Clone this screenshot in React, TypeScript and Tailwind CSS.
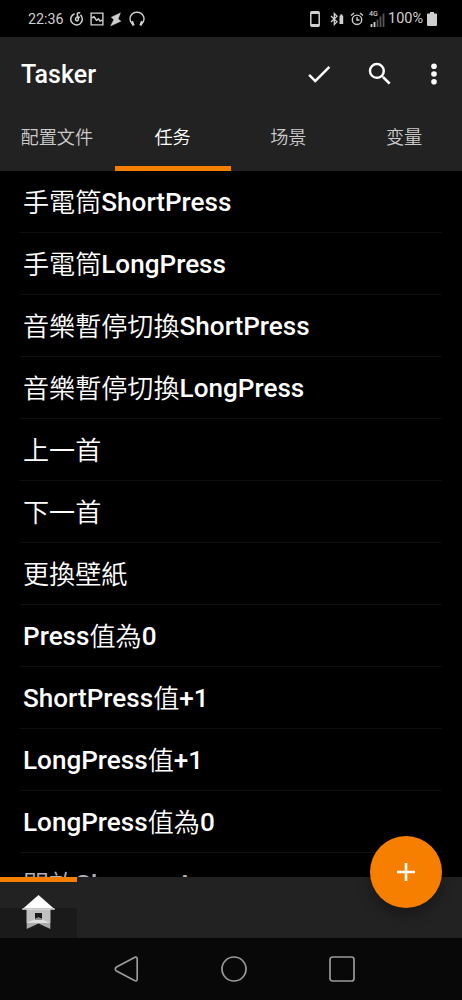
import { ReactNode } from 'react';

const tabs = ['配置文件', '任务', '场景', '变量'];

const tasks = [
    '手電筒ShortPress',
    '手電筒LongPress',
    '音樂暫停切換ShortPress',
    '音樂暫停切換LongPress',
    '上一首',
    '下一首',
    '更換壁紙',
    'Press值為0',
    'ShortPress值+1',
    'LongPress值+1',
    'LongPress值為0',
    '開放Shames A',
];

// Latin runs are medium weight, CJK runs stay demi-light
function MixedText({ text }: { text: string }) {
    const parts = text.match(/[\x00-\x7f]+|[^\x00-\x7f]+/g) || [];
    return (
        <>
            {parts.map((part, i) => (
                <span key={i} className={`leading-none ${/^[\x00-\x7f]/.test(part) ? 'align-[1px] font-medium' : 'font-[350]'}`}>{part}</span>
            ))}
        </>
    );
}

function Icon({ children, className, viewBox = '0 0 24 24' }: { children: ReactNode; className: string; viewBox?: string }) {
    return (
        <svg viewBox={viewBox} className={`block shrink-0 ${className}`} fill="none" stroke="currentColor">
            {children}
        </svg>
    );
}

function StatusBar() {
    return (
        <div className="flex h-[37px] shrink-0 items-center bg-black pl-7 pr-[25px] pt-px text-[#cfcfcf]">
            <span className="w-[36px] text-[14.3px] leading-[36px]">22:36</span>
            {/* Music */}
            <Icon viewBox="0 0 14 14" className="ml-[6px] h-[14px] w-[14px]">
                <path d="M4.6 1.700A5.800 5.800 0 1 0 10.500 2.900" strokeWidth="1.500" />
                <path d="M10.200 1.200C8.600.2 7 1 7.300 2.500L8.300 7.200C8.500 9.300 5.600 9.400 5.500 7.300 5.400 5.300 8 4.200 9.800 5.600" strokeWidth="1.500" />
            </Icon>
            {/* Picture */}
            <Icon viewBox="0 0 14 14" className="ml-[6px] h-[14px] w-[14px]">
                <path d="M1.1 1.1h11.800v11.800H1.100z" strokeWidth="1.400" />
                <path d="M1.500 6 4 4.800l2.500 3.500 2-1.500 1.500 2.300L12.500 8" strokeWidth="1.500" />
            </Icon>
            {/* Tasker bolt */}
            <Icon viewBox="0 0 12 15" className="ml-[6px] h-[15px] w-[12px]">
                <path d="M10.500.8 1.200 5.300l2.600 2.300-3.300 6.400L11 9.200 8.200 7z" fill="currentColor" strokeWidth=".4" />
            </Icon>
            {/* Headphones */}
            <Icon viewBox="0 0 16 16" className="ml-[7px] h-4 w-4">
                <path d="M3.700 13.300C-1.500 8.500 1.500 1.200 8 1.200s9.500 7.300 4.300 12.100" strokeWidth="1.400" />
                <path d="m2.800 10.300 1.800 4.200M13.200 10.300l-1.800 4.200" strokeWidth="2.400" />
            </Icon>
            <div className="ml-auto flex items-center">
                <Icon viewBox="0 0 10 16" className="h-4 w-[10px]">
                    <rect x=".8" y=".8" width="8.400" height="14.400" rx="1" strokeWidth="1.500" />
                    <path d="M1 1.800h8M1 14.200h8" strokeWidth="2.200" />
                </Icon>
                <Icon viewBox="0 0 14 14" className="ml-[10px] h-[14px] w-[14px]">
                    <path d="m1 4 6 5.800L4.300 12.500V1.500L7 4.200 1 10" strokeWidth="1.300" />
                    <path d="M9.500 3.500h3.700V12H9.500zM10.500 2.300h1.700v1.500h-1.700z" fill="currentColor" stroke="none" />
                </Icon>
                <Icon viewBox="0 0 14 14" className="ml-[6px] h-[14px] w-[14px]">
                    <circle cx="7" cy="7.800" r="4.700" strokeWidth="1.400" />
                    <path d="M7 5v3h2.500M1 3.500 4 1M13 3.500 10 1" strokeWidth="1.300" />
                </Icon>
                <div className="relative ml-[6px] h-[15px] w-[15px]">
                    <span className="absolute -left-px -top-px text-[7px] font-medium leading-[7px]">4G</span>
                    <svg viewBox="0 0 15 15" className="block h-[15px] w-[15px]" fill="none">
                        <path d="M1.500 15v-3M4.500 15v-5" stroke="#cfcfcf" strokeWidth="1.800" />
                        <path d="M7.500 15V7.500M10.500 15V4.500M13.500 15V1.500" stroke="#555" strokeWidth="1.800" />
                    </svg>
                </div>
                <span className="ml-[3px] w-[35px] text-[14.500px] leading-[36px]">100%</span>
                <Icon viewBox="0 0 10 14" className="ml-[4px] h-[14px] w-[10px]">
                    <path d="M3 0h4v1.500h2a1 1 0 0 1 1 1V13a1 1 0 0 1-1 1H1a1 1 0 0 1-1-1V2.500a1 1 0 0 1 1-1h2z" fill="currentColor" stroke="none" />
                </Icon>
            </div>
        </div>
    );
}

function Header() {
    return (
        <div className="flex h-[133.5px] shrink-0 flex-col bg-[#222]">
            <div className="flex h-[73px] items-center pl-[21px] pr-[15px] text-white">
                <h1 className="pt-[2px] text-[25px] font-medium leading-[30px]">Tasker</h1>
                <Icon className="ml-auto h-[30px] w-[30px]">
                    <path d="M9 16.200 4.800 12l-1.400 1.400L9 19 21 7l-1.400-1.400z" fill="currentColor" stroke="none" />
                </Icon>
                <Icon className="ml-[31px] h-[30px] w-[30px]">
                    <path d="M15.500 14h-.79l-.28-.27A6.471 6.471 0 0 0 16 9.500 6.500 6.500 0 1 0 9.500 16c1.610 0 3.090-.59 4.230-1.570l.27.28v.79l5 4.990L20.490 19l-4.990-5zm-6 0C7.010 14 5 11.990 5 9.500S7.010 5 9.500 5 14 7.010 14 9.500 11.990 14 9.500 14z" fill="currentColor" stroke="none" />
                </Icon>
                <Icon viewBox="0 0 6 22" className="ml-[36px] mr-[10px] h-[22px] w-[6px]">
                    <g fill="currentColor" stroke="none">
                        <circle cx="3" cy="3.200" r="2.800" />
                        <circle cx="3" cy="11" r="2.800" />
                        <circle cx="3" cy="18.800" r="2.800" />
                    </g>
                </Icon>
            </div>
            <div className="-ml-px grid flex-1 grid-cols-4 text-[18.2px] font-[350]">
                {tabs.map((tab) => (
                    <button
                        key={tab}
                        className={`flex justify-center border-b-[5px] pt-[14px] leading-[27px] ${tab === '任务' ? 'border-[#f77f00] text-white' : 'border-transparent text-[#cacaca]'}`}
                    >
                        {tab}
                    </button>
                ))}
            </div>
        </div>
    );
}

export default function App() {
    return (
        <div className="flex h-[1000px] w-[462px] flex-col overflow-hidden bg-black font-['Roboto','Noto_Sans_CJK_SC',sans-serif]">
            <StatusBar />
            <Header />

            {/* Task list */}
            <ul className="min-h-0 flex-1 overflow-hidden bg-black px-5 pt-[0.5px] font-['Roboto','Noto_Sans_CJK_TC',sans-serif]">
                {tasks.map((task, i) => (
                    <li key={task} className={`flex h-[62px] items-center whitespace-nowrap border-b border-[#0f0f0f] pl-[3px] pt-[2px] text-[26.1px] ${i === 11 ? 'text-[#b0b0b0]' : 'text-white'}`}>
                        <div className="leading-[38px]"><MixedText text={task} /></div>
                    </li>
                ))}
            </ul>

            {/* Project bar */}
            <div className="relative h-[61px] shrink-0 bg-[#222]">
                <div className="flex h-full w-[77px] flex-col border-t-[5px] border-[#f77f00] bg-linear-to-b from-[#222] from-[46%] to-[#1a1a1a] to-[46%]">
                    <svg viewBox="0 0 34 36" className="ml-[21px] mt-[12px] h-9 w-[34px]">
                        <path d="M5.500 14h24v15h-24z" fill="#c0c0c0" />
                        <path d="M14 19h7v7h-7z" fill="#1a1a1a" />
                        <path d="M5.700 29 17.500 23.500 29.300 29v6L17.500 29.500 5.700 35z" fill="#aaa" />
                        <path d="M5.700 29 17.500 23.500 29.300 29z" fill="#dedede" />
                        <path d="M14 25.100 17.500 23.500 21 25.100V26h-7z" fill="#909090" />
                        <path d="M17.500 1 34 15.500H1z" fill="#fff" />
                        <path d="M1.600 14h31.800l.6 1.500H1z" fill="#c8c8c8" />
                    </svg>
                </div>
                <button className="absolute right-[20.5px] top-[-41px] flex h-[72px] w-[72px] items-center justify-center rounded-full bg-[#f77f00] shadow-[0_7px_14px_rgba(0,0,0,0.3)]">
                    <Icon viewBox="0 0 18 18" className="h-[18px] w-[18px] text-white">
                        <path d="M9 0v18M0 9h18" strokeWidth="2.600" />
                    </Icon>
                </button>
            </div>

            {/* System navigation */}
            <div className="flex h-[62px] shrink-0 items-center justify-center gap-[82px] bg-[#080808] pl-[6px] text-[#9a9a9a]">
                <Icon viewBox="0 0 26 26" className="h-[26px] w-[26px]">
                    <path d="M21.500 1.400 3.500 11q-2.500 2 0 4l18 9.600q2.700 1.300 2.700-1.500V3q0-2.800-2.700-1.600z" strokeWidth="1.700" />
                </Icon>
                <Icon viewBox="0 0 26 26" className="h-[26px] w-[26px]">
                    <circle cx="13" cy="13" r="12" strokeWidth="1.700" />
                </Icon>
                <Icon viewBox="0 0 26 26" className="h-[26px] w-[26px]">
                    <rect x="1" y="1" width="24" height="24" rx="2.500" strokeWidth="1.700" />
                </Icon>
            </div>
        </div>
    );
}
